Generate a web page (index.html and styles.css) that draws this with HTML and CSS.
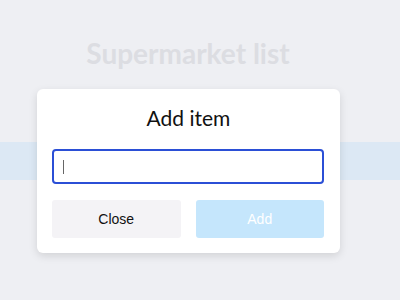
FILE: index.html
```html
<!DOCTYPE html>
<html>
<head>
<meta charset="utf-8">
<link rel="stylesheet" href="styles.css">
</head>
<body>
<div class="app">
  <h1 class="title">Supermarket list</h1>
  <div class="band"></div>
</div>
<div class="modal">
  <h2 class="modal-title">Add item</h2>
  <div class="field"><span class="caret"></span></div>
  <div class="actions">
    <button class="btn btn-close">Close</button>
    <button class="btn btn-add">Add</button>
  </div>
</div>
</body>
</html>
```
FILE: styles.css
```css
html, body {
  margin: 0;
  padding: 0;
  width: 400px;
  height: 300px;
  overflow: hidden;
  background: #eeeff3;
  font-family: "Lato", "Noto Sans", sans-serif;
}
.app {
  display: flex;
  flex-direction: column;
  align-items: center;
  padding-top: 34px;
}
.title {
  margin: 0;
  font-size: 28px;
  font-weight: 700;
  color: #dcdde2;
  line-height: 38px;
  margin-left: -24px;
}
.band {
  margin-top: 70px;
  width: 100%;
  height: 38px;
  background: #dce8f4;
}
.modal {
  position: absolute;
  left: 37px;
  top: 89px;
  width: 303px;
  height: 164px;
  box-sizing: border-box;
  background: #fff;
  border-radius: 6px;
  box-shadow: 0 3px 8px rgba(0,0,0,0.12);
  padding: 15px 15px 0 15px;
  display: flex;
  flex-direction: column;
}
.modal-title {
  margin: 0;
  text-align: center;
  font-size: 21px;
  font-weight: 400;
  color: #111;
  line-height: 28px;
}
.field {
  margin-top: 17px;
  height: 35px;
  width: 272px;
  box-sizing: border-box;
  border: 2px solid #2b4fd6;
  border-radius: 4px;
  display: flex;
  align-items: center;
  padding-left: 9px;
}
.caret {
  width: 1px;
  height: 14px;
  background: #666;
}
.actions {
  margin-top: 16px;
  display: flex;
  gap: 15px;
  width: 272px;
}
.btn {
  flex: 1;
  height: 38px;
  border: none;
  border-radius: 3px;
  font-family: "Liberation Sans", Arial, sans-serif;
  font-size: 14px;
}
.btn-close {
  background: #f4f3f6;
  color: #111;
}
.btn-add {
  background: #c5e6fc;
  color: #fff;
}
```
